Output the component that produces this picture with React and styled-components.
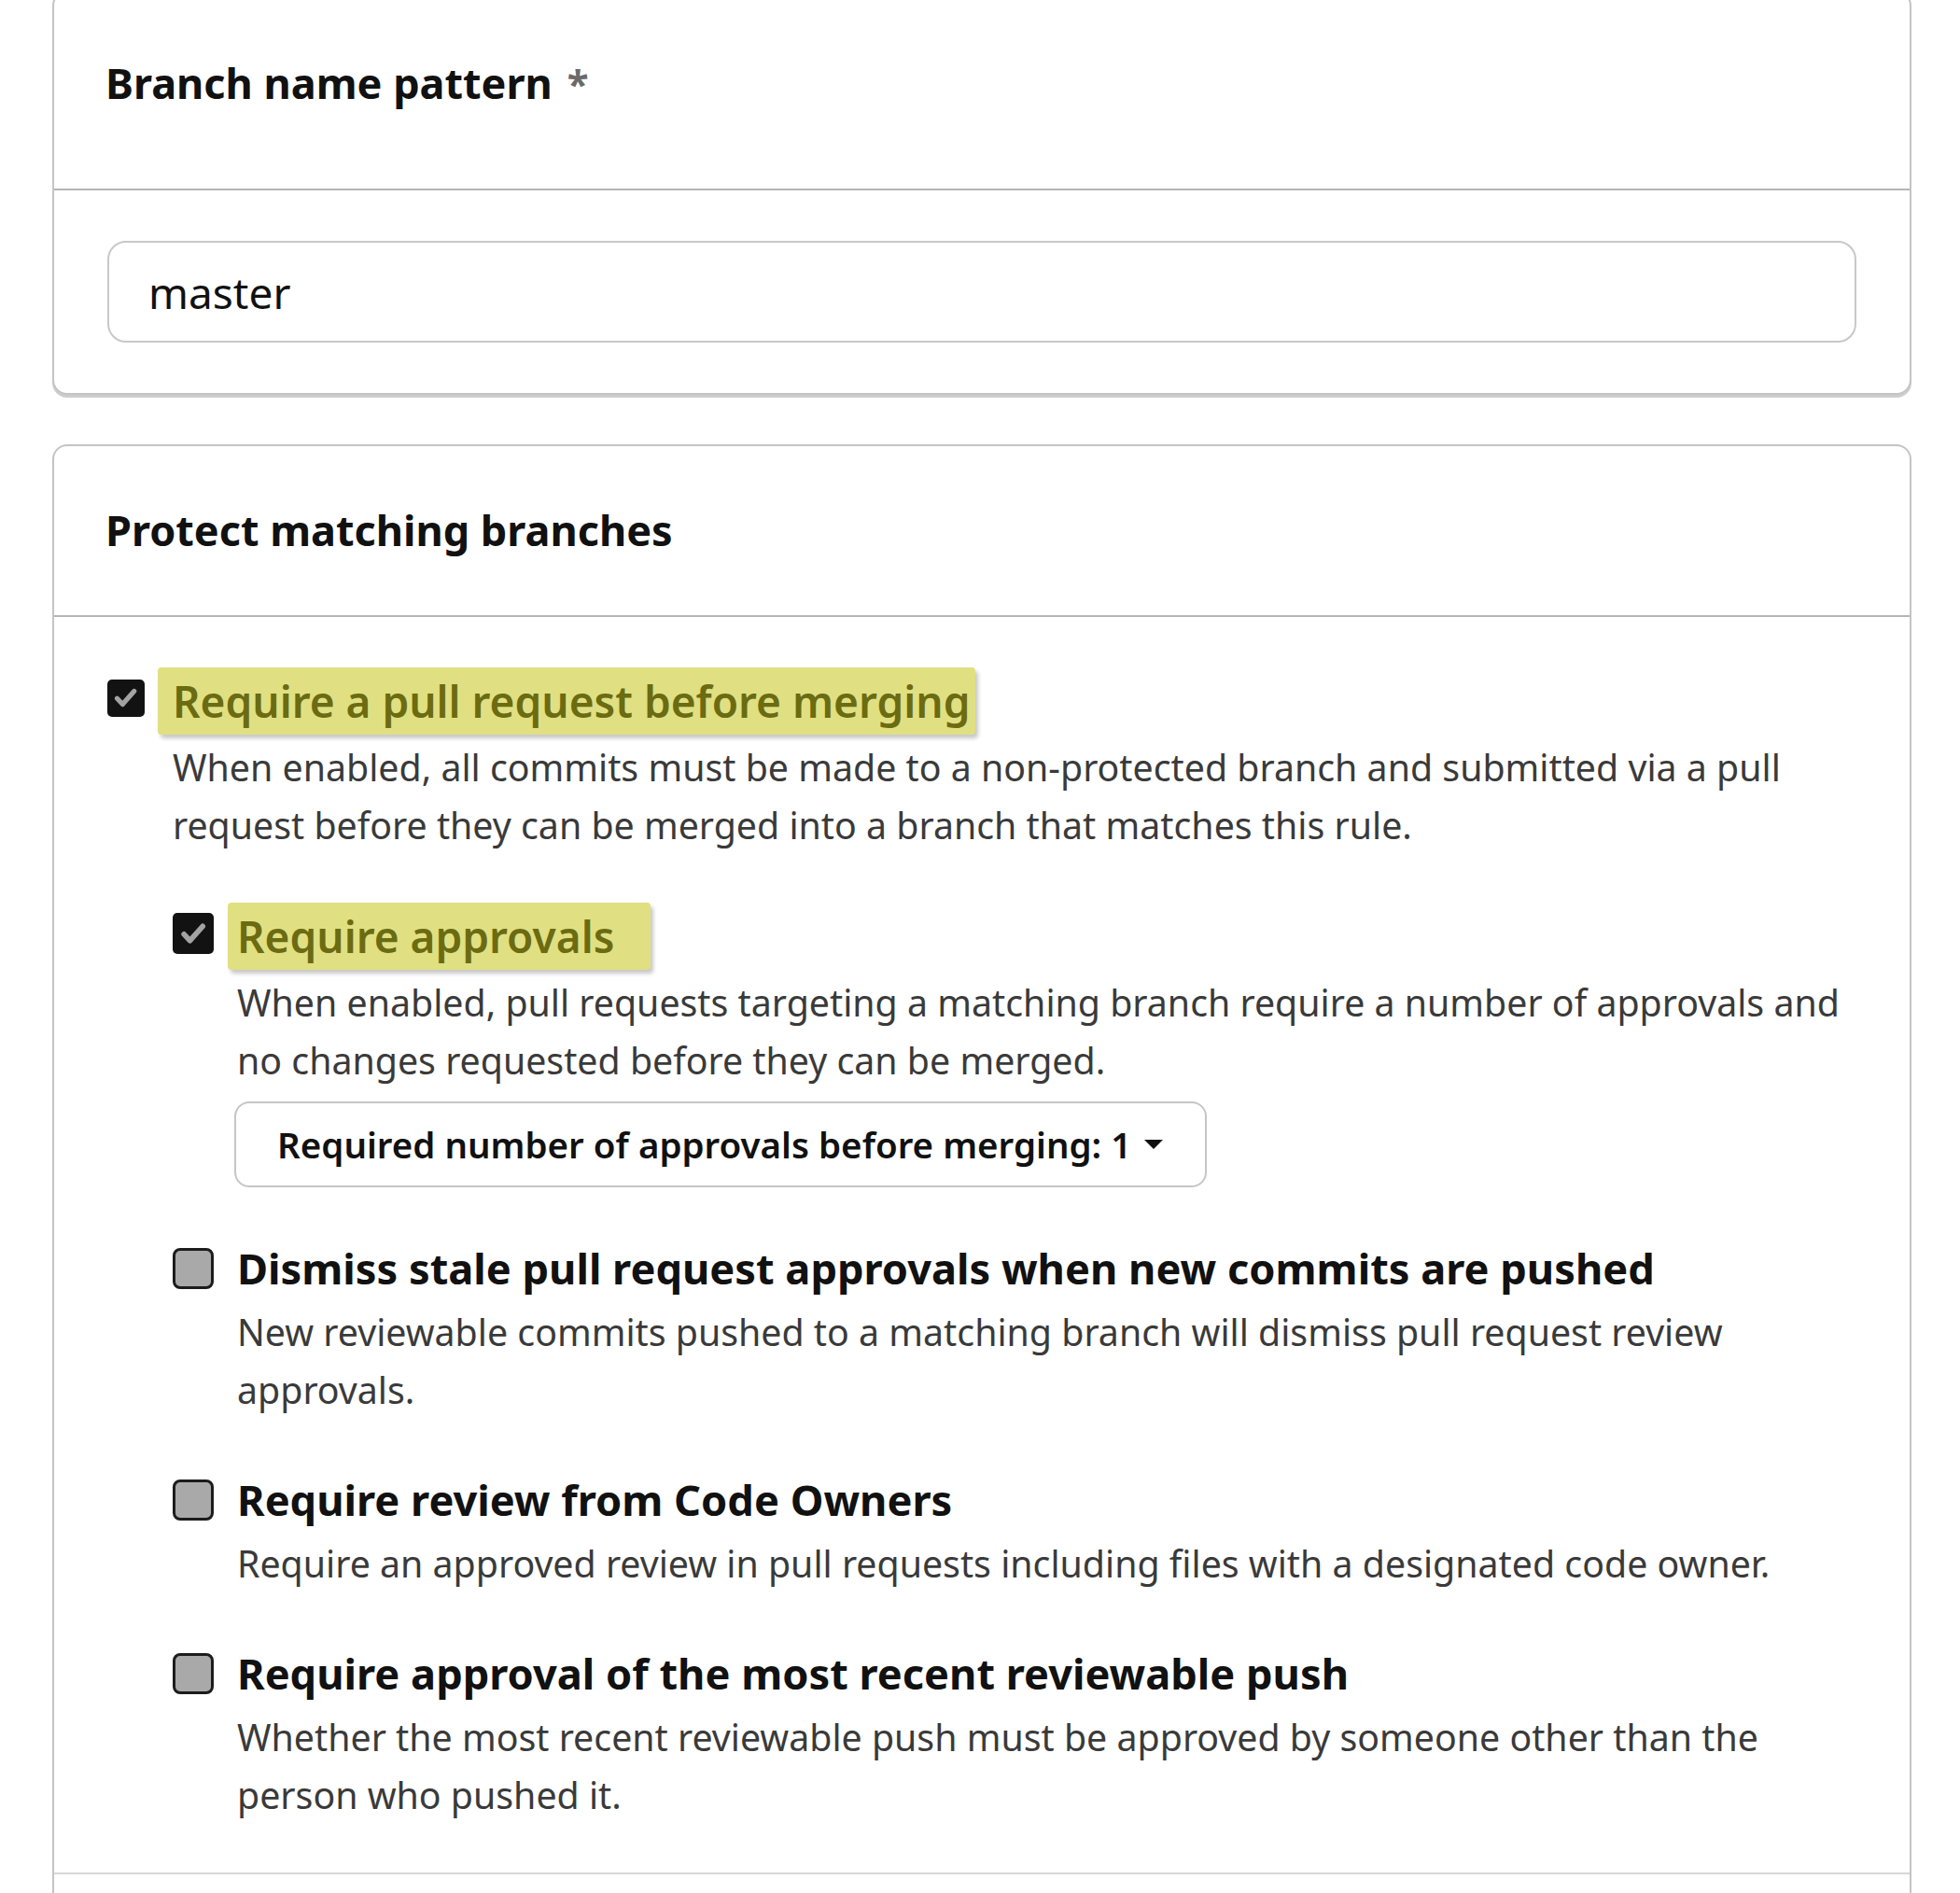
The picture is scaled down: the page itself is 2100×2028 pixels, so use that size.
import React from "react";
import styled, { createGlobalStyle } from "styled-components";

const GlobalStyle = createGlobalStyle`
    body {
        margin: 0;
        background: #fff;
        font-family: "Noto Sans", "Open Sans", sans-serif;
        color: #111;
    }
`;

const Page = styled.div`
    display: flex;
    flex-direction: column;
    gap: 53px;
    width: 1992px;
    margin: -10px 0 0 56px;
`;

const Card = styled.section`
    border: 2px solid #c4c4c4;
    border-radius: 16px;
    box-shadow: 0 3px 0 #cdcdcd;
    background: #fff;
    overflow: hidden;
`;

const CardHeader = styled.div`
    padding: ${(p) => p.$pad};
    border-bottom: 2px solid #b5b5b5;
`;

const Heading = styled.h2`
    margin: 0;
    font-size: 45px;
    line-height: 60px;
    font-weight: 700;
    color: #111;
`;

const Required = styled.span`
    margin-left: 16px;
    font-size: 42px;
    font-weight: 700;
    color: #6a6a6a;
    vertical-align: top;
`;

const CardBody = styled.div`
    padding: ${(p) => p.$pad};
`;

const TextInput = styled.input`
    display: block;
    box-sizing: border-box;
    width: 100%;
    height: 109px;
    padding: 0 42px;
    border: 2px solid #c8c8c8;
    border-radius: 20px;
    font-family: "Noto Sans", "Open Sans", sans-serif;
    font-size: 46px;
    color: #111;
    outline: none;
`;

const OptionList = styled.div`
    display: flex;
    flex-direction: column;
    gap: 54px;
`;

const OptionRow = styled.div`
    display: grid;
    grid-template-columns: ${(p) => p.$col}px 1fr;
`;

const BoxSlot = styled.div`
    height: 66px;
    display: flex;
    align-items: center;
`;

const CheckedBox = styled.span`
    display: flex;
    align-items: center;
    justify-content: center;
    width: ${(p) => p.$size}px;
    height: ${(p) => p.$size}px;
    border-radius: 5px;
    background: #121212;
`;

const EmptyBox = styled.span`
    box-sizing: border-box;
    width: 44px;
    height: 44px;
    border: 3px solid #1c1c1c;
    border-radius: 8px;
    background: #a9a9a9;
`;

const OptionTitle = styled.div`
    font-size: 45.2px;
    line-height: 66px;
    font-weight: 700;
    color: #111;
    white-space: nowrap;
`;

const Highlight = styled.span`
    display: inline-block;
    margin-left: -${(p) => p.$left}px;
    padding: 3px ${(p) => p.$right}px 3px ${(p) => p.$left}px;
    border-radius: 4px;
    background: #e0e082;
    color: #6b6b12;
    font-size: 46px;
    font-weight: 600;
    box-shadow: 3px 4px 4px rgba(0, 0, 0, 0.22);
`;

const OptionDesc = styled.p`
    margin: 4px 0 0;
    font-size: 39.3px;
    line-height: 62px;
    color: #3a3a3a;
`;

const Children = styled.div`
    margin-top: 52px;
`;

const Dropdown = styled.button`
    display: flex;
    align-items: center;
    gap: 12px;
    box-sizing: border-box;
    width: 1042px;
    height: 92px;
    margin: 13px 0 0 -3px;
    padding: 0 36px 0 44px;
    border: 2px solid #c6c6c6;
    border-radius: 16px;
    background: #fff;
    font-family: "Noto Sans", "Open Sans", sans-serif;
    font-size: 38.5px;
    font-weight: 600;
    color: #111;
    white-space: nowrap;
`;

const NextSection = styled.div`
    height: 120px;
    border-top: 2px solid #d8d8d8;
`;

function CheckBox({ checked, size = 44 }) {
    if (!checked) return <EmptyBox />;
    return (
        <CheckedBox $size={size}>
            <svg width={size * 0.78} height={size * 0.78} viewBox="0 0 24 24">
                <path d="M5 12.5l4.5 4.8L19 6.5" fill="none" stroke="#a3a3a3" strokeWidth="4" strokeLinecap="round" strokeLinejoin="round" />
            </svg>
        </CheckedBox>
    );
}

function Option({ checked, size, col, title, mark, desc, children }) {
    return (
        <OptionRow $col={col}>
            <BoxSlot>
                <CheckBox checked={checked} size={size} />
            </BoxSlot>
            <div>
                <OptionTitle>
                    {mark ? (
                        <Highlight $left={mark[0]} $right={mark[1]}>{title}</Highlight>
                    ) : (
                        title
                    )}
                </OptionTitle>
                <OptionDesc>{desc}</OptionDesc>
                {children}
            </div>
        </OptionRow>
    );
}

export default function App() {
    return (
        <>
            <GlobalStyle />
            <Page>
                <Card>
                    <CardHeader $pad="67px 57px 83px 55px">
                        <Heading>
                            Branch name pattern<Required>*</Required>
                        </Heading>
                    </CardHeader>
                    <CardBody $pad="54px 57px 54px">
                        <TextInput defaultValue="master" readOnly />
                    </CardBody>
                </Card>

                <Card>
                    <CardHeader $pad="60px 57px 61px 55px">
                        <Heading>Protect matching branches</Heading>
                    </CardHeader>
                    <CardBody $pad="54px 57px 52px">
                        <Option
                            checked
                            size={40}
                            col={70}
                            title="Require a pull request before merging"
                            mark={[16, 5]}
                            desc="When enabled, all commits must be made to a non-protected branch and submitted via a pull request before they can be merged into a branch that matches this rule."
                        >
                            <Children>
                                <OptionList>
                                    <Option
                                        checked
                                        size={44}
                                        col={69}
                                        title="Require approvals"
                                        mark={[10, 39]}
                                        desc="When enabled, pull requests targeting a matching branch require a number of approvals and no changes requested before they can be merged."
                                    >
                                        <Dropdown type="button">
                                            Required number of approvals before merging: 1
                                            <svg width="24" height="14" viewBox="0 0 24 14">
                                                <path d="M2 2h20L12 12z" fill="#111" />
                                            </svg>
                                        </Dropdown>
                                    </Option>
                                    <Option
                                        col={69}
                                        title="Dismiss stale pull request approvals when new commits are pushed"
                                        desc="New reviewable commits pushed to a matching branch will dismiss pull request review approvals."
                                    />
                                    <Option
                                        col={69}
                                        title="Require review from Code Owners"
                                        desc="Require an approved review in pull requests including files with a designated code owner."
                                    />
                                    <Option
                                        col={69}
                                        title="Require approval of the most recent reviewable push"
                                        desc="Whether the most recent reviewable push must be approved by someone other than the person who pushed it."
                                    />
                                </OptionList>
                            </Children>
                        </Option>
                    </CardBody>
                    <NextSection />
                </Card>
            </Page>
        </>
    );
}
